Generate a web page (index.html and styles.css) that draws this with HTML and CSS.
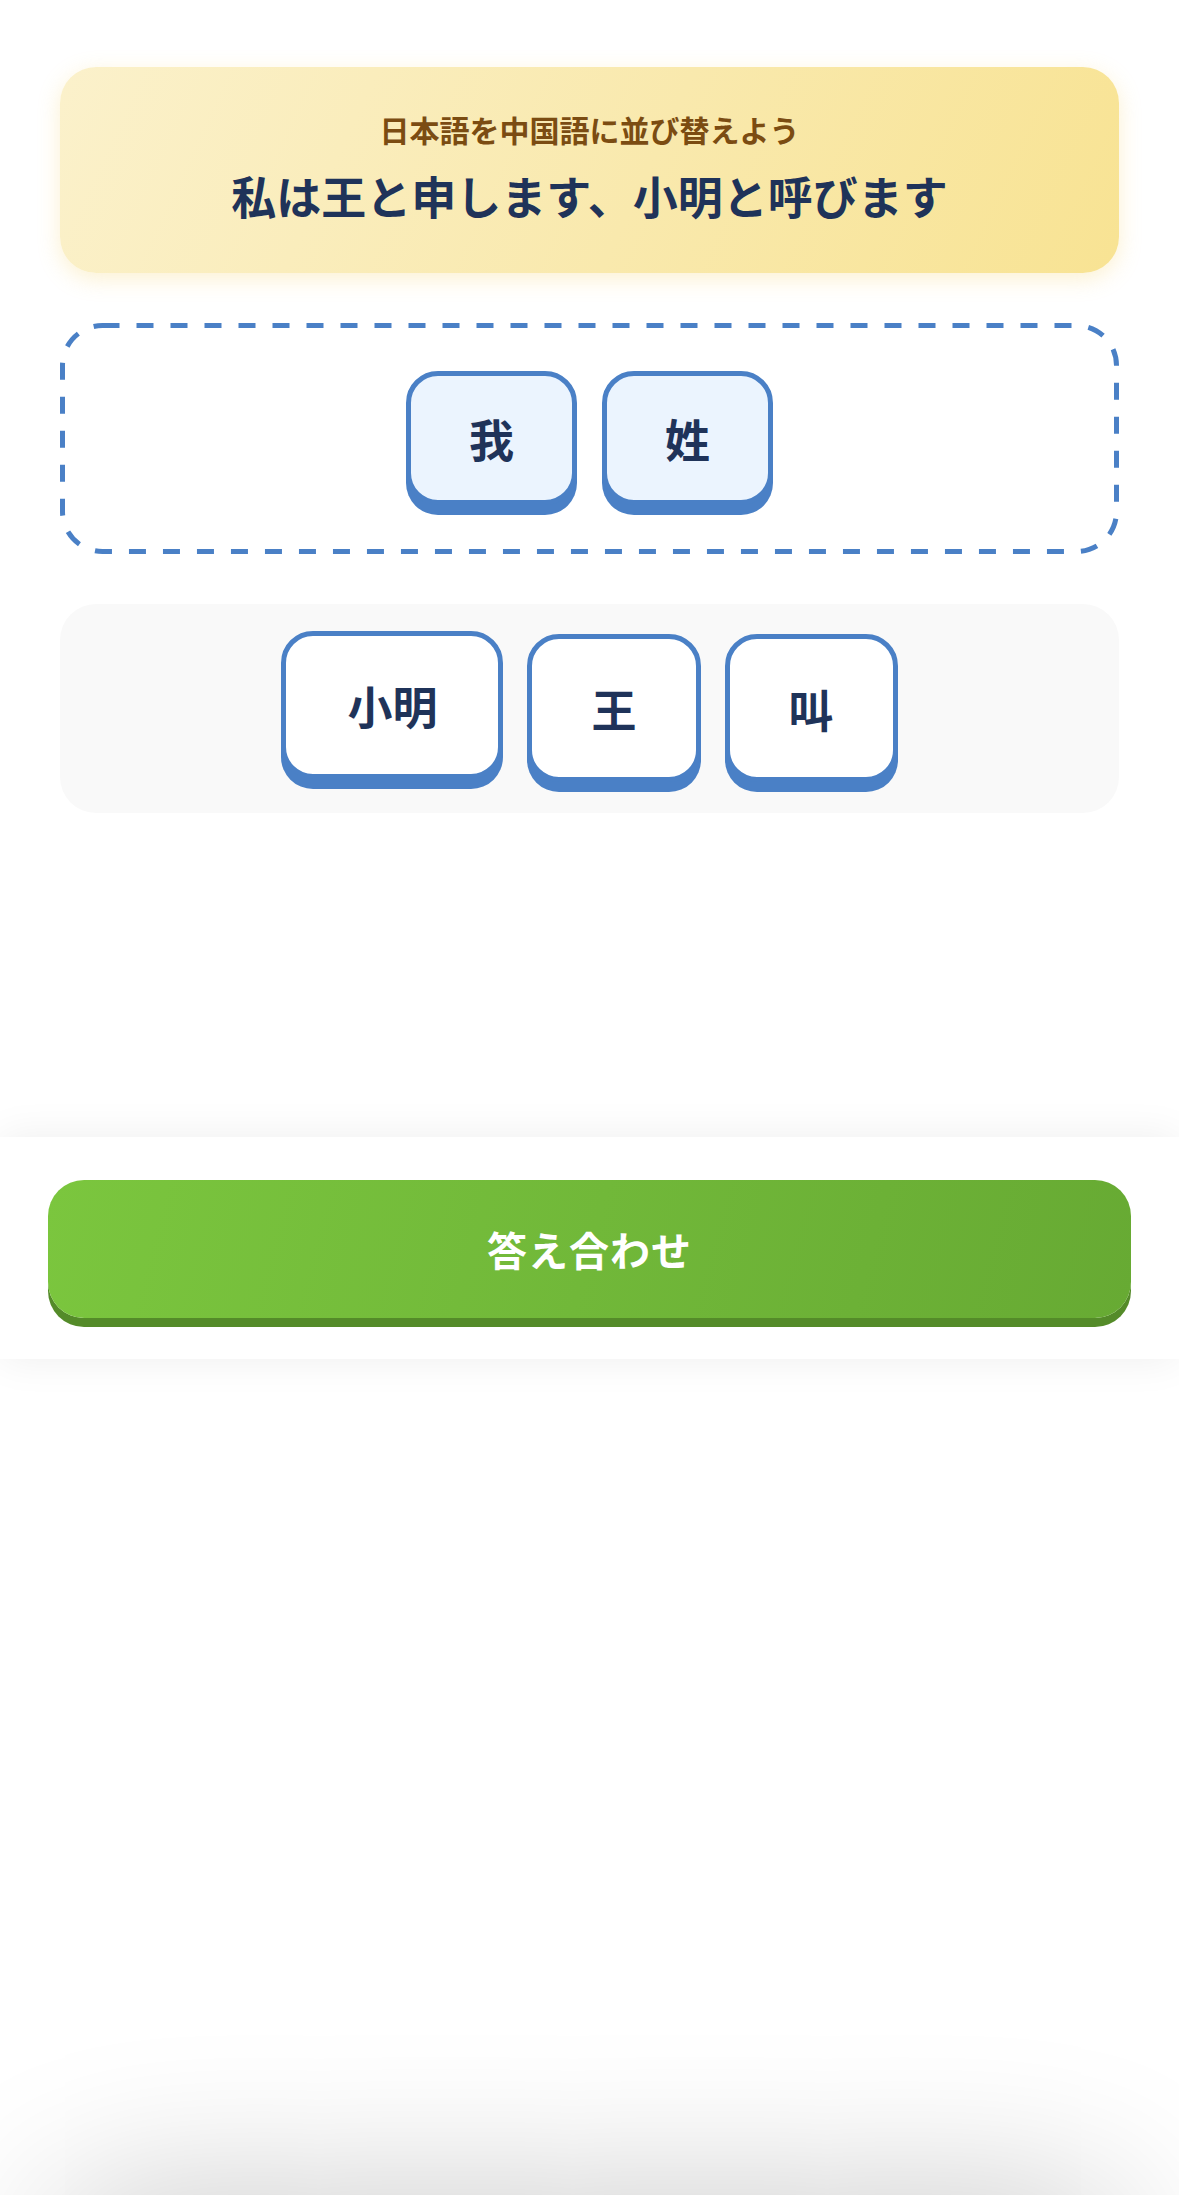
FILE: index.html
```html
<!DOCTYPE html>
<html lang="ja">
<head>
<meta charset="utf-8">
<title>並び替え</title>
<link rel="stylesheet" href="styles.css">
</head>
<body>
<div class="page">
  <main class="main">
    <section class="prompt">
      <p class="prompt-sub">日本語を中国語に並び替えよう</p>
      <p class="prompt-text">私は王と申します、小明と呼びます</p>
    </section>
    <section class="answer">
      <svg class="answer-frame" aria-hidden="true">
        <rect x="2.5" y="2.5" rx="40" ry="40"></rect>
      </svg>
      <div class="tile tile-placed">我</div>
      <div class="tile tile-placed">姓</div>
    </section>
    <section class="bank">
      <div class="tile tile-bank tile-lift">小明</div>
      <div class="tile tile-bank">王</div>
      <div class="tile tile-bank">叫</div>
    </section>
  </main>
  <footer class="footer">
    <button class="check">答え合わせ</button>
  </footer>
</div>
<div class="edge-shade"></div>
</body>
</html>
```
FILE: styles.css
```css
* { box-sizing: border-box; }
html, body {
  margin: 0;
  padding: 0;
  background: #ffffff;
  font-family: "Noto Sans CJK JP", "Noto Sans", sans-serif;
  overflow: hidden;
}
.page {
  display: flex;
  flex-direction: column;
  min-height: 2195px;
}
.main {
  min-height: 1137px;
  padding: 67px 60px 0;
  display: flex;
  flex-direction: column;
}
.prompt {
  height: 206px;
  border-radius: 36px;
  background: linear-gradient(115deg, #fbf1cb 0%, #f9e9ad 55%, #f8e393 100%);
  box-shadow: 0 6px 22px rgba(244, 205, 90, 0.28);
  padding-top: 41px;
  display: flex;
  flex-direction: column;
  align-items: center;
}
.prompt p { margin: 0; }
.prompt-sub {
  font-size: 30px;
  line-height: 42px;
  font-weight: 700;
  color: #7b4c12;
}
.prompt-text {
  margin-top: 14px !important;
  font-size: 45px;
  line-height: 64px;
  font-weight: 700;
  color: #1f3359;
}
.answer {
  position: relative;
  margin-top: 50px;
  border-radius: 40px;
  padding: 48px 0;
  min-height: 231px;
  display: flex;
  justify-content: center;
  align-items: flex-start;
  gap: 25px;
}
.answer-frame {
  position: absolute;
  inset: 0;
  width: 100%;
  height: 100%;
  overflow: visible;
  pointer-events: none;
}
.answer-frame rect {
  width: calc(100% - 5px);
  height: calc(100% - 5px);
  fill: none;
  stroke: #4a80c6;
  stroke-width: 5;
  stroke-dasharray: 17 17;
}
.tile {
  display: flex;
  align-items: center;
  justify-content: center;
  height: 134px;
  padding: 0 58px;
  border: 5px solid #4a80c6;
  border-radius: 32px;
  box-shadow: 0 10px 0 #4a80c6;
  font-size: 45px;
  font-weight: 700;
  color: #1f3359;
  line-height: 1;
}
.tile-placed {
  background: #ebf4fe;
}
.bank {
  margin-top: 50px;
  background: #f9f9f9;
  border-radius: 36px;
  padding: 30px 0 31px;
  display: flex;
  justify-content: center;
  align-items: flex-start;
  gap: 24px;
}
.tile-bank {
  background: #ffffff;
  height: 148px;
  padding: 0 59px;
}
.tile-lift {
  margin-top: -3px;
  padding: 0 61px;
}
.footer {
  background: #ffffff;
  padding: 43px 48px 41px;
  box-shadow: 0 0 40px rgba(0, 0, 0, 0.07);
  position: relative;
}
.check {
  display: block;
  width: 100%;
  height: 138px;
  border: none;
  border-radius: 36px;
  background: linear-gradient(105deg, #7bc63e 0%, #71b839 50%, #67aa33 100%);
  box-shadow: 0 9px 0 #548b29;
  color: #ffffff;
  font-family: "Noto Sans CJK JP", "Noto Sans", sans-serif;
  font-size: 40px;
  font-weight: 700;
  letter-spacing: 1px;
  cursor: pointer;
}
.edge-shade {
  position: fixed;
  left: 70px;
  right: 70px;
  bottom: -120px;
  height: 100px;
  border-radius: 60px;
  box-shadow: 0 0 160px 20px rgba(0, 0, 0, 0.22);
}
```
